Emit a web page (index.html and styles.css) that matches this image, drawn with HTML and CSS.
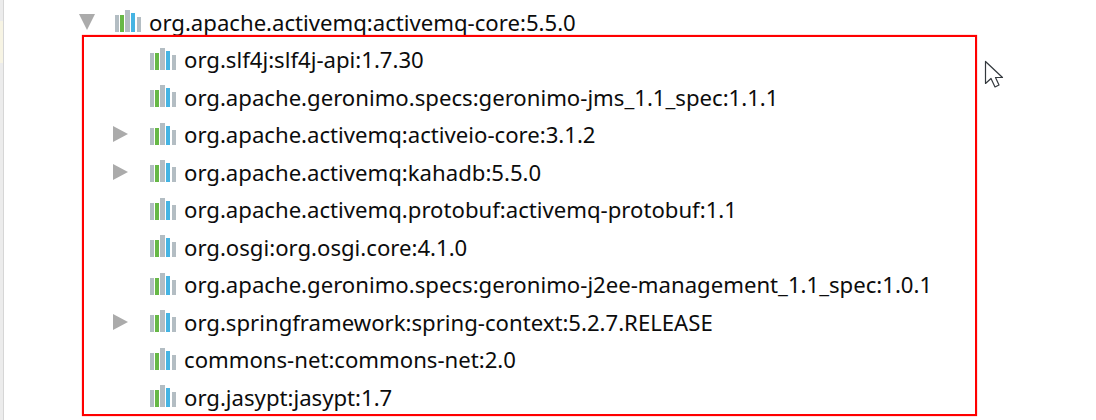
FILE: index.html
```html
<!DOCTYPE html>
<html lang="en">
<head>
  <meta charset="UTF-8">
  <title>Dependencies</title>
  <link rel="stylesheet" href="styles.css">
</head>
<body>

<svg width="0" height="0" class="defs">
  <symbol id="lib" viewBox="0 0 26 22">
    <rect x="0" y="5" width="4" height="17" fill="#b3bdc3"/>
    <rect x="5" y="5" width="4" height="17" fill="#67b846"/>
    <rect x="10" y="0" width="5" height="22" fill="#b3bdc3"/>
    <rect x="16" y="3" width="4" height="19" fill="#45b4e3"/>
    <rect x="22" y="7" width="4" height="15" fill="#b3bdc3"/>
  </symbol>
</svg>

<div class="page">
  <div class="gutter">
    <div class="gutter-mark"></div>
  </div>

  <div class="tree">
    <div class="row">
      <span class="arrow arrow-down"></span>
      <svg class="icon"><use href="#lib"/></svg>
      <span>org.apache.activemq:activemq-core:5.5.0</span>
    </div>

    <div class="children">
      <div class="row">
        <span class="arrow"></span>
        <svg class="icon"><use href="#lib"/></svg>
        <span>org.slf4j:slf4j-api:1.7.30</span>
      </div>
      <div class="row">
        <span class="arrow"></span>
        <svg class="icon"><use href="#lib"/></svg>
        <span>org.apache.geronimo.specs:geronimo-jms_1.1_spec:1.1.1</span>
      </div>
      <div class="row">
        <span class="arrow arrow-right"></span>
        <svg class="icon"><use href="#lib"/></svg>
        <span>org.apache.activemq:activeio-core:3.1.2</span>
      </div>
      <div class="row">
        <span class="arrow arrow-right"></span>
        <svg class="icon"><use href="#lib"/></svg>
        <span>org.apache.activemq:kahadb:5.5.0</span>
      </div>
      <div class="row">
        <span class="arrow"></span>
        <svg class="icon"><use href="#lib"/></svg>
        <span>org.apache.activemq.protobuf:activemq-protobuf:1.1</span>
      </div>
      <div class="row">
        <span class="arrow"></span>
        <svg class="icon"><use href="#lib"/></svg>
        <span>org.osgi:org.osgi.core:4.1.0</span>
      </div>
      <div class="row">
        <span class="arrow"></span>
        <svg class="icon"><use href="#lib"/></svg>
        <span>org.apache.geronimo.specs:geronimo-j2ee-management_1.1_spec:1.0.1</span>
      </div>
      <div class="row">
        <span class="arrow arrow-right"></span>
        <svg class="icon"><use href="#lib"/></svg>
        <span>org.springframework:spring-context:5.2.7.RELEASE</span>
      </div>
      <div class="row">
        <span class="arrow"></span>
        <svg class="icon"><use href="#lib"/></svg>
        <span>commons-net:commons-net:2.0</span>
      </div>
      <div class="row">
        <span class="arrow"></span>
        <svg class="icon"><use href="#lib"/></svg>
        <span>org.jasypt:jasypt:1.7</span>
      </div>
    </div>
  </div>

  <div class="highlight"></div>

  <svg class="cursor" width="20" height="30" viewBox="0 0 20 30">
    <path d="M1.5 1.5 L1.5 23.5 L7 18.5 L11 27 L15 25 L11.5 17.5 L18.5 17.5 Z" fill="#fff" stroke="#33383d" stroke-width="1.2" stroke-linejoin="round"/>
  </svg>
</div>

</body>
</html>
```

FILE: styles.css
```css
html, body {
  margin: 0;
  height: 100%;
  overflow: hidden;
}
body {
  background: #fff;
  font-family: "Noto Sans", sans-serif;
  font-size: 22.15px;
  color: #0c0c0c;
}
.defs {
  position: absolute;
}
.page {
  display: flex;
  height: 420px;
  position: relative;
}
.gutter {
  width: 3px;
  flex-shrink: 0;
  background: #ececec;
  border-right: 1px solid #d6d6d6;
  padding-top: 21px;
}
.gutter-mark {
  height: 42px;
  background: #f7f4e4;
}
.tree {
  padding: 3px 0 0 75px;
}
.row {
  display: flex;
  align-items: center;
  height: 37.5px;
  white-space: nowrap;
}
.children {
  padding-left: 35px;
}
.arrow {
  width: 16px;
  height: 16px;
  flex-shrink: 0;
  margin-right: 20px;
}
.arrow-down {
  border-style: solid;
  border-width: 16px 8px 0;
  border-color: #ababab transparent transparent;
  width: 0;
  height: 0;
}
.arrow-right {
  border-style: solid;
  border-width: 8.5px 0 8.5px 15px;
  border-color: transparent transparent transparent #ababab;
  width: 0;
  height: 0;
  margin-left: -1px;
  margin-right: 22px;
}
.icon {
  width: 26px;
  height: 22px;
  flex-shrink: 0;
  margin: 0 8px 1px 0;
}
.highlight {
  position: absolute;
  left: 82px;
  top: 35px;
  width: 891px;
  height: 377px;
  border: 2px solid #ff0000;
  box-shadow: 0 0 1px rgba(255, 0, 0, 0.7);
}
.cursor {
  position: absolute;
  left: 984px;
  top: 60px;
}
```
